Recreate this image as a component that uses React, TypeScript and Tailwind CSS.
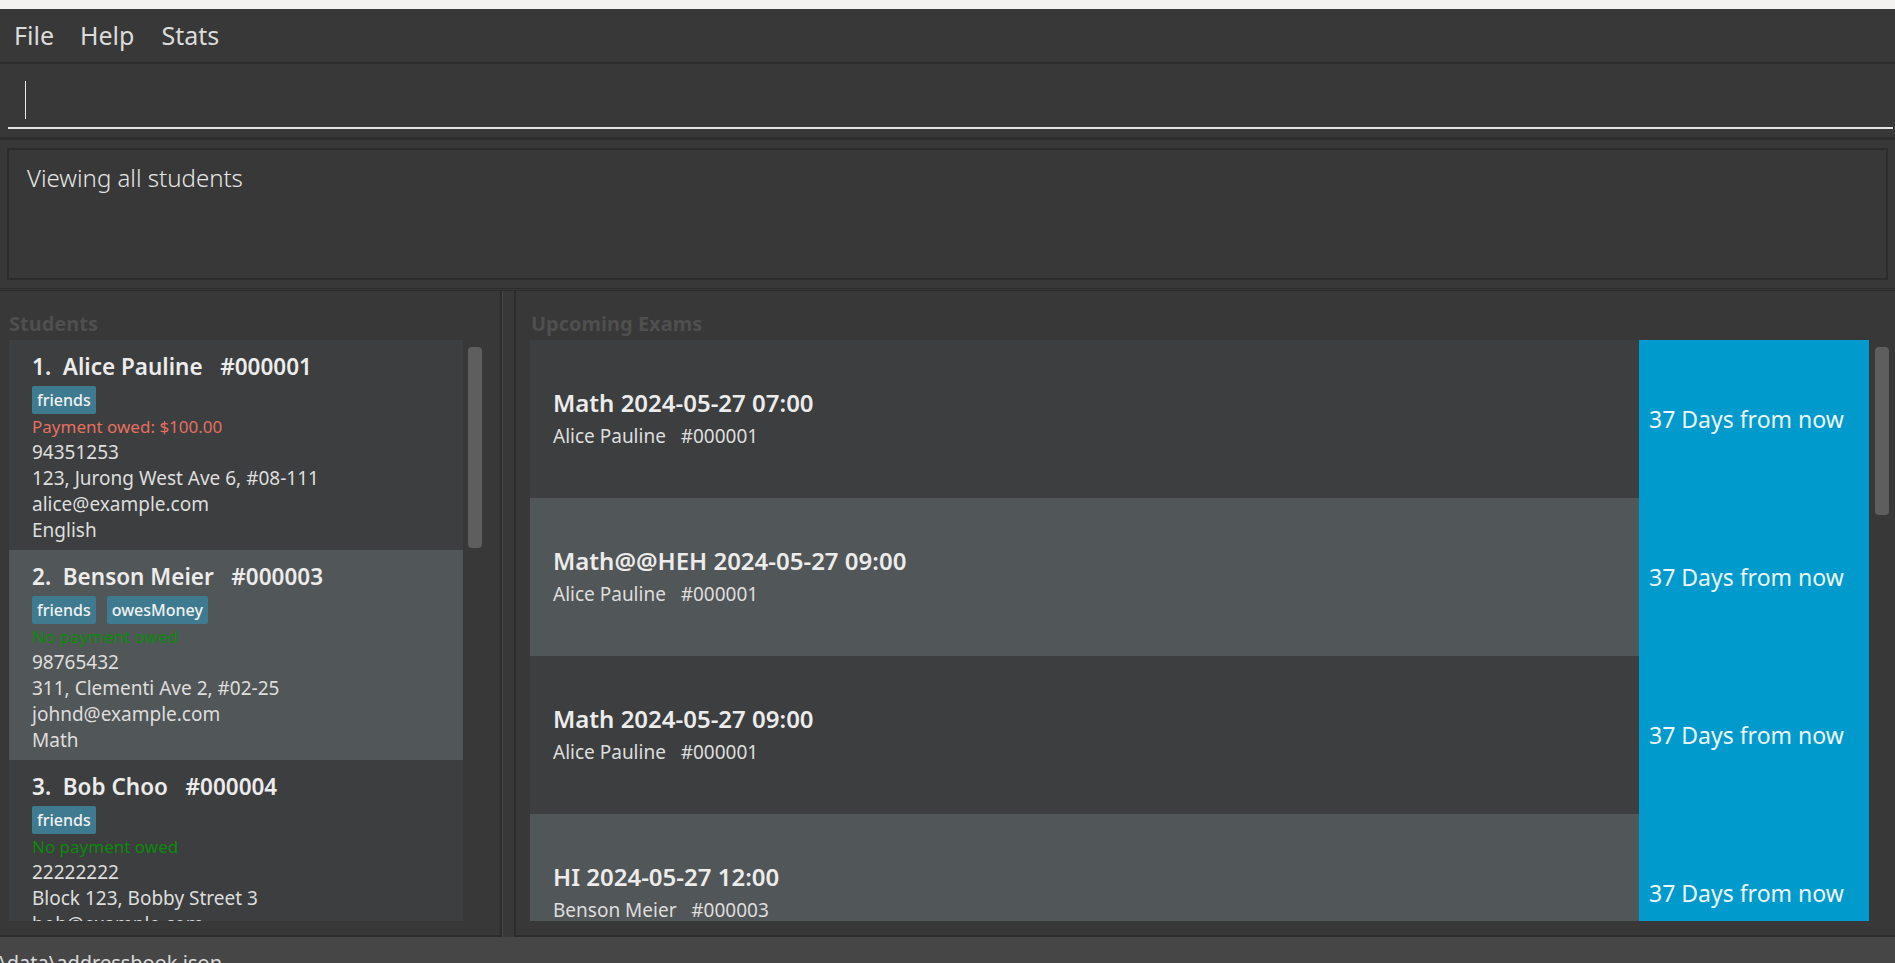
import React from 'react';

type Student = {
  id: string;
  name: string;
  tags: string[];
  owed: string | null;
  phone: string;
  address: string;
  email: string;
  subject: string;
};

const students: Student[] = [
  {
    id: '#000001',
    name: 'Alice Pauline',
    tags: ['friends'],
    owed: '$100.00',
    phone: '94351253',
    address: '123, Jurong West Ave 6, #08-111',
    email: 'alice@example.com',
    subject: 'English',
  },
  {
    id: '#000003',
    name: 'Benson Meier',
    tags: ['friends', 'owesMoney'],
    owed: null,
    phone: '98765432',
    address: '311, Clementi Ave 2, #02-25',
    email: 'johnd@example.com',
    subject: 'Math',
  },
  {
    id: '#000004',
    name: 'Bob Choo',
    tags: ['friends'],
    owed: null,
    phone: '22222222',
    address: 'Block 123, Bobby Street 3',
    email: 'bob@example.com',
    subject: 'Science',
  },
];

const exams = [
  { title: 'Math 2024-05-27 07:00', who: 'Alice Pauline', id: '#000001' },
  { title: 'Math@@HEH 2024-05-27 09:00', who: 'Alice Pauline', id: '#000001' },
  { title: 'Math 2024-05-27 09:00', who: 'Alice Pauline', id: '#000001' },
  { title: 'HI 2024-05-27 12:00', who: 'Benson Meier', id: '#000003' },
];

function StudentCard({ s, index, selected }: { s: Student; index: number; selected: boolean }) {
  return (
    <div className={(selected ? 'bg-[#515658]' : 'bg-[#3c3e40]') + ' h-[210px] shrink-0 pl-[23px] pt-[12px]'}>
      <div className="h-[30px] flex items-center text-[22.5px] font-semibold text-[#ececec] leading-none whitespace-pre">
        {index}.  {s.name}   {s.id}
      </div>
      <div className="mt-[4px] flex gap-[11px]">
        {s.tags.map(t => (
          <span
            key={t}
            className="h-[28px] px-[5px] flex items-center rounded-[2px] bg-[#3e7b91] text-[16px] font-medium text-[#f2f2f2]"
          >
            {t}
          </span>
        ))}
      </div>
      {s.owed ? (
        <div className="h-[25px] flex items-center text-[17px] text-[#e5705e]">Payment owed: {s.owed}</div>
      ) : (
        <div className="h-[25px] flex items-center text-[17px] text-[#0b8a0b]">No payment owed</div>
      )}
      <div className="text-[19px] leading-[26px] text-[#dedede]">
        <div>{s.phone}</div>
        <div>{s.address}</div>
        <div>{s.email}</div>
        <div>{s.subject}</div>
      </div>
    </div>
  );
}

function ExamRow({ e, odd }: { e: (typeof exams)[number]; odd: boolean }) {
  return (
    <div className={(odd ? 'bg-[#515658]' : 'bg-[#3c3e40]') + ' h-[158px] shrink-0 flex'}>
      <div className="flex-1 flex flex-col justify-center pl-[23px] pb-[2px]">
        <div className="text-[24px] font-semibold text-[#ececec] leading-[34px]">{e.title}</div>
        <div className="mt-[2px] text-[19px] text-[#dedede] leading-[28px] whitespace-pre">
          {e.who}   {e.id}
        </div>
      </div>
      <div className="w-[230px] bg-[#009bcc] flex items-center pl-[10px] text-[23px] text-[#eef7fb]">
        37 Days from now
      </div>
    </div>
  );
}

export default function App() {
  return (
    <div className="w-[1895px] h-[963px] overflow-hidden bg-[#383838] flex flex-col font-['Noto_Sans',sans-serif]">
      <div className="h-[9px] bg-[#f3f2f1] shrink-0" />

      {/* Menu */}
      <div className="h-[55px] shrink-0 flex items-center border-b-2 border-[#2d2d2d] text-[25px] text-[#dcdcdc]">
        <span className="ml-[14px]">File</span>
        <span className="ml-[26px]">Help</span>
        <span className="ml-[27px]">Stats</span>
      </div>

      {/* Command box */}
      <div className="h-[73px] shrink-0 px-[8px] pr-[2px] pt-[17px]">
        <div className="h-[48px] border-b-2 border-[#e4e4e4] pl-[17px]">
          <div className="w-px h-[38px] bg-[#e8e8e8]" />
        </div>
      </div>
      <div className="h-[11px] shrink-0 border-t-[3px] border-[#2e2e2e]" />

      {/* Result display */}
      <div className="h-[132px] shrink-0 mx-[7px] border-2 border-[#2c2c2c] pl-[18px] pt-[10px]">
        <div className="text-[24px] font-light text-[#e6e6e6]">Viewing all students</div>
      </div>
      <div className="h-[8px] shrink-0" />
      <div className="h-[3px] shrink-0 border-y border-[#2c2c2c]" />

      {/* Panels */}
      <div className="flex-1 min-h-0 flex">
        <div className="w-[502px] shrink-0 border-r-2 border-b-2 border-[#2c2c2c] flex flex-col pb-[14px]">
          <div className="pt-[18px] pl-[9px] h-[49px] text-[20px] font-bold text-[#4f4f4f] leading-[30px]">Students</div>
          <div className="flex-1 min-h-0 flex">
            <div className="ml-[9px] w-[454px] flex flex-col overflow-hidden">
              {students.map((s, i) => (
                <StudentCard key={s.id} s={s} index={i + 1} selected={i === 1} />
              ))}
            </div>
            <div className="ml-[5px] mt-[7px] w-[14px] h-[201px] rounded-[4px] bg-[#5e5e5e]" />
          </div>
        </div>
        <div className="w-px bg-[#4a4a4a] shrink-0" />
        <div className="w-[11px] shrink-0" />
        <div className="flex-1 border-l-2 border-b-2 border-[#2c2c2c] flex flex-col pb-[14px]">
          <div className="pt-[18px] pl-[15px] h-[49px] text-[20px] font-bold text-[#4f4f4f] leading-[30px]">Upcoming Exams</div>
          <div className="flex-1 min-h-0 flex">
            <div className="ml-[14px] w-[1339px] flex flex-col overflow-hidden">
              {exams.map((e, i) => (
                <ExamRow key={i} e={e} odd={i % 2 === 1} />
              ))}
            </div>
            <div className="ml-[6px] mt-[7px] w-[14px] h-[168px] rounded-[4px] bg-[#5e5e5e]" />
          </div>
        </div>
      </div>

      {/* Status bar */}
      <div className="h-[26px] shrink-0 bg-[#464646] overflow-hidden">
        <div className="-ml-[6px] pt-[12px] text-[20px] text-[#dcdcdc] leading-[28px]">.\data\addressbook.json</div>
      </div>
    </div>
  );
}
